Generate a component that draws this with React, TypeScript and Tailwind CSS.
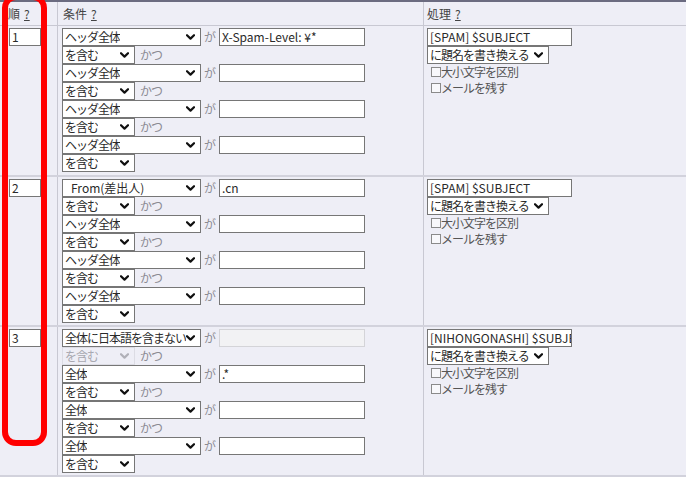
import React from "react";

const Chevron = ({ disabled }: { disabled?: boolean }) => (
  <svg width="9" height="6" viewBox="0 0 9 6" className="shrink-0">
    <path
      d="M1 1.2 L4.5 4.6 L8 1.2"
      fill="none"
      stroke={disabled ? "#b0b0b8" : "#111"}
      strokeWidth="2.2"
      strokeLinecap="round"
      strokeLinejoin="round"
    />
  </svg>
);

function Sel({
  text,
  width,
  disabled,
  jp = true,
  pad = "pl-[2px]",
}: {
  text: string;
  width: string;
  disabled?: boolean;
  jp?: boolean;
  pad?: string;
}) {
  return (
    <div
      className={`${width} h-[18px] flex items-center justify-between pr-[5px] ${pad} border ${
        disabled
          ? "border-[#dcdce4] bg-[#eeeef6] text-[#a8a8b0]"
          : "border-[#767676] bg-white text-[#2a2a2a]"
      }`}
    >
      <span
        className={`whitespace-nowrap overflow-hidden leading-[16px] ${
          jp ? "tracking-[-1px]" : ""
        }`}
      >
        {text}
      </span>
      <Chevron disabled={disabled} />
    </div>
  );
}

function Inp({
  value,
  width,
  disabled,
}: {
  value: string;
  width: string;
  disabled?: boolean;
}) {
  return (
    <div
      className={`${width} h-[18px] flex items-center pl-[2px] overflow-hidden whitespace-nowrap leading-[16px] border ${
        disabled
          ? "border-[#d4d4d8] bg-[#f2f2f4]"
          : "border-[#767676] bg-white text-[#2a2a2a]"
      }`}
    >
      {value}
    </div>
  );
}

type Cond = {
  field: string;
  value: string;
  jp?: boolean;
  pad?: string;
  disabledOp?: boolean;
  disabledInp?: boolean;
};

const rows: { n: string; conds: Cond[]; subj: string; pb: string }[] = [
  {
    n: "1",
    conds: [
      { field: "ヘッダ全体", value: "X-Spam-Level: ¥*" },
      { field: "ヘッダ全体", value: "" },
      { field: "ヘッダ全体", value: "" },
      { field: "ヘッダ全体", value: "" },
    ],
    subj: "[SPAM] $SUBJECT",
    pb: "pb-[3px]",
  },
  {
    n: "2",
    conds: [
      { field: "From(差出人)", value: ".cn", jp: false, pad: "pl-[8px]" },
      { field: "ヘッダ全体", value: "" },
      { field: "ヘッダ全体", value: "" },
      { field: "ヘッダ全体", value: "" },
    ],
    subj: "[SPAM] $SUBJECT",
    pb: "pb-[2px]",
  },
  {
    n: "3",
    conds: [
      { field: "全体に日本語を含まない", value: "", disabledOp: true, disabledInp: true },
      { field: "全体", value: ".*" },
      { field: "全体", value: "" },
      { field: "全体", value: "" },
    ],
    subj: "[NIHONGONASHI] $SUBJECT",
    pb: "pb-[2px]",
  },
];

function Check({ label }: { label: string }) {
  return (
    <div className="h-[16px] flex items-center pl-[4px] text-[#555]">
      <span className="w-[10px] h-[10px] border border-[#8a8a8a] bg-[#f8f8fb] shrink-0" />
      <span className="tracking-[-1px] leading-[16px]">{label}</span>
    </div>
  );
}

export default function App() {
  return (
    <div className="relative w-[686px] h-[477px] overflow-hidden bg-[#eeeef6] text-[12px] font-['Noto_Sans_CJK_JP','Noto_Sans',sans-serif] text-[#2a2a2a]">
      <div className="h-[2px] bg-[#6b6b80]" />
      {/* header */}
      <div className="grid grid-cols-[58px_366px_1fr] h-[24px] border-b border-[#c8c8d2] text-[#444]">
        <div className="border-r border-[#c8c8d2] pl-[8px] flex items-center">
          <span>順</span>
          <span className="ml-[4px] underline">?</span>
        </div>
        <div className="border-r border-[#c8c8d2] pl-[5px] flex items-center">
          <span>条件</span>
          <span className="ml-[4px] underline">?</span>
        </div>
        <div className="pl-[3px] flex items-center">
          <span>処理</span>
          <span className="ml-[4px] underline">?</span>
        </div>
      </div>
      {rows.map((r) => (
        <div
          key={r.n}
          className="grid grid-cols-[58px_366px_1fr] border-b-2 border-[#d2d2dc]"
        >
          <div className={`border-r border-[#c8c8d2] pl-[9px] pt-[2px] ${r.pb}`}>
            <Inp value={r.n} width="w-[32px]" />
          </div>
          <div className={`border-r border-[#c8c8d2] pl-[4px] pt-[2px] ${r.pb} flex flex-col`}>
            {r.conds.map((c, i) => (
              <div key={i} className="flex flex-col">
                <div className="flex items-center">
                  <Sel text={c.field} width="w-[139px]" jp={c.jp !== false} pad={c.pad} />
                  <span className="w-[18px] text-center text-[#8a8a92]">が</span>
                  <Inp value={c.value} width="w-[146px]" disabled={c.disabledInp} />
                </div>
                <div className="flex items-center">
                  <Sel text="を含む" width="w-[73px]" disabled={c.disabledOp} />
                  {i < 3 && (
                    <span className="ml-[5px] text-[#8a8a92] tracking-[-1px]">かつ</span>
                  )}
                </div>
              </div>
            ))}
          </div>
          <div className="pl-[3px] pt-[2px] flex flex-col">
            <Inp value={r.subj} width="w-[145px]" />
            <Sel text="に題名を書き換える" width="w-[122px]" />
            <Check label="大小文字を区別" />
            <Check label="メールを残す" />
          </div>
        </div>
      ))}
      {/* red annotation box */}
      <div className="absolute left-[2px] top-[-6px] w-[45px] h-[452px] rounded-[14px] border-[6px] border-[#ff0000]" />
    </div>
  );
}
